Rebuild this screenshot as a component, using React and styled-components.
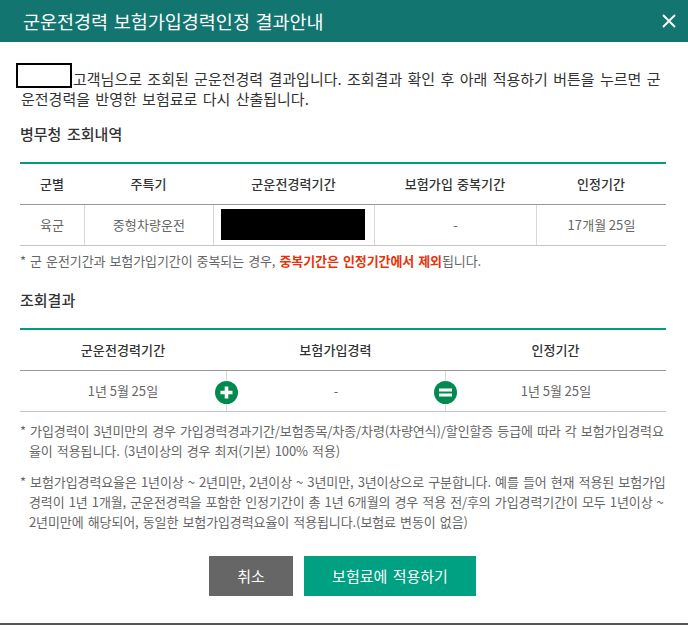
import React from "react";
import styled, { createGlobalStyle } from "styled-components";

const Global = createGlobalStyle`
  html, body { margin: 0; padding: 0; background: #555; }
  * { box-sizing: border-box; }
`;

const Modal = styled.div`
  width: 688px;
  height: 623px;
  background: #fff;
  overflow: hidden;
  font-family: "Noto Sans CJK KR", "Noto Sans", sans-serif;
  color: #333;
`;

const Header = styled.header`
  height: 42px;
  background: #127570;
  display: flex;
  align-items: center;
  justify-content: space-between;
  padding: 0 12px 0 23px;
  color: #fff;
`;

const Title = styled.h1`
  margin: 0;
  font-size: 18.5px;
  font-weight: 400;
  word-spacing: 1.5px;
  line-height: 30px;
`;

const Close = styled.button`
  width: 14px;
  height: 14px;
  padding: 0;
  border: 0;
  background: none;
  color: #fff;
  display: flex;
  margin-top: -1px;
`;

const Body = styled.div`
  padding: 21px 22px 0 20px;
`;

const Intro = styled.p`
  margin: 0 0 0 1px;
  font-size: 15px;
  line-height: 20px;
  letter-spacing: 0;
  word-spacing: 2px;
  word-break: break-all;
`;

const Redacted = styled.span`
  display: inline-block;
  width: 56px;
  height: 25px;
  margin: 0 1px 0 -5px;
  border: 2px solid #000;
  background: #fff;
  vertical-align: -3px;
`;

const SectionTitle = styled.h2`
  margin: ${(p) => p.$top}px 0 18px;
  font-size: 15px;
  font-weight: 500;
  line-height: 20px;
  word-spacing: 2.2px;
  color: #333;
`;

const TableFrame = styled.div`
  display: grid;
  grid-template-columns: ${(p) => p.$cols};
  border-top: 2px solid #009b82;
  border-bottom: 1px solid #c4c4c4;
`;

const HeadCell = styled.div`
  height: 41px;
  padding-bottom: 2px;
  border-bottom: 1px solid #999;
  display: flex;
  align-items: center;
  justify-content: center;
  font-size: 13px;
  font-weight: 500;
  letter-spacing: 0.1px;
  word-spacing: 1px;
  color: #333;
`;

const Cell = styled.div`
  position: relative;
  height: 40px;
  padding-bottom: 2px;
  display: flex;
  align-items: center;
  justify-content: center;
  font-size: 13px;
  letter-spacing: 0.1px;
  word-spacing: -0.5px;
  color: #666;
  border-left: ${(p) => (p.$divided ? "1px solid #d8d8d8" : "0")};
`;

const BlackBar = styled.div`
  width: 144px;
  height: 31px;
  background: #000;
  margin-right: 2px;
`;

const Note = styled.p`
  margin: ${(p) => p.$top || 0}px 0 0;
  padding-left: 9px;
  text-indent: -9px;
  font-size: 13px;
  line-height: 20px;
  letter-spacing: -0.1px;
  word-spacing: 1.3px;
  word-break: break-all;
  color: #666;
`;

const Hot = styled.b`
  font-weight: 700;
  color: #e8320a;
`;

const Badge = styled.span`
  position: absolute;
  left: -12px;
  top: 10px;
  width: 23px;
  height: 23px;
  display: flex;
`;

const Footer = styled.div`
  display: flex;
  justify-content: center;
  gap: 11px;
  margin-top: 24px;
  padding-right: 1px;
`;

const Button = styled.button`
  width: ${(p) => p.$w}px;
  height: 40px;
  border: 0;
  padding: 0 0 2px;
  background: ${(p) => p.$bg};
  color: #fff;
  font-family: inherit;
  font-size: 15px;
  word-spacing: 2px;
`;

const PlusIcon = () => (
  <svg viewBox="0 0 23 23" width="23" height="23">
    <circle cx="11.5" cy="11.5" r="11.5" fill="#008a4f" />
    <path d="M9.7 5.5h3.6v4.2h4.2v3.6h-4.2v4.2H9.7v-4.2H5.5V9.7h4.2z" fill="#fff" />
  </svg>
);

const EqualsIcon = () => (
  <svg viewBox="0 0 23 23" width="23" height="23">
    <circle cx="11.5" cy="11.5" r="11.5" fill="#008a4f" />
    <path d="M5 7.4h13v3H5zM5 12.6h13v3H5z" fill="#fff" />
  </svg>
);

export default function App() {
  return (
    <>
      <Global />
      <Modal>
        <Header>
          <Title>군운전경력 보험가입경력인정 결과안내</Title>
          <Close aria-label="닫기">
            <svg viewBox="0 0 14 14" width="14" height="14">
              <path d="M1 1l12 12M13 1L1 13" stroke="currentColor" strokeWidth="1.9" fill="none" />
            </svg>
          </Close>
        </Header>
        <Body>
          <Intro>
            <Redacted />
            고객님으로 조회된 군운전경력 결과입니다. 조회결과 확인 후 아래 적용하기 버튼을 누르면 군운전경력을 반영한 보험료로 다시 산출됩니다.
          </Intro>
          <SectionTitle $top={15}>병무청 조회내역</SectionTitle>
          <TableFrame $cols="64px 129px 161px 162px 130px">
            <HeadCell>군별</HeadCell>
            <HeadCell>주특기</HeadCell>
            <HeadCell>군운전경력기간</HeadCell>
            <HeadCell>보험가입 중복기간</HeadCell>
            <HeadCell>인정기간</HeadCell>
            <Cell>육군</Cell>
            <Cell $divided>중형차량운전</Cell>
            <Cell $divided><BlackBar /></Cell>
            <Cell $divided>-</Cell>
            <Cell $divided>17개월 25일</Cell>
          </TableFrame>
          <Note $top={5}>
            * 군 운전기간과 보험가입기간이 중복되는 경우, <Hot>중복기간은 인정기간에서 제외</Hot>됩니다.
          </Note>
          <SectionTitle $top={19}>조회결과</SectionTitle>
          <TableFrame $cols="206px 219px 221px">
            <HeadCell>군운전경력기간</HeadCell>
            <HeadCell>보험가입경력</HeadCell>
            <HeadCell>인정기간</HeadCell>
            <Cell>1년 5월 25일</Cell>
            <Cell $divided>
              <Badge><PlusIcon /></Badge>-
            </Cell>
            <Cell $divided>
              <Badge><EqualsIcon /></Badge>1년 5월 25일
            </Cell>
          </TableFrame>
          <Note $top={9}>
            * 가입경력이 3년미만의 경우 가입경력경과기간/보험종목/차종/차령(차량연식)/할인할증 등급에 따라 각 보험가입경력요율이 적용됩니다. (3년이상의 경우 최저(기본) 100% 적용)
          </Note>
          <Note $top={11}>
            * 보험가입경력요율은 1년이상 ~ 2년미만, 2년이상 ~ 3년미만, 3년이상으로 구분합니다. 예를 들어 현재 적용된 보험가입경력이 1년 1개월, 군운전경력을 포함한 인정기간이 총 1년 6개월의 경우 적용 전/후의 가입경력기간이 모두 1년이상 ~ 2년미만에 해당되어, 동일한 보험가입경력요율이 적용됩니다.(보험료 변동이 없음)
          </Note>
          <Footer>
            <Button $w={84} $bg="#666">취소</Button>
            <Button $w={172} $bg="#00a082">보험료에 적용하기</Button>
          </Footer>
        </Body>
      </Modal>
    </>
  );
}
